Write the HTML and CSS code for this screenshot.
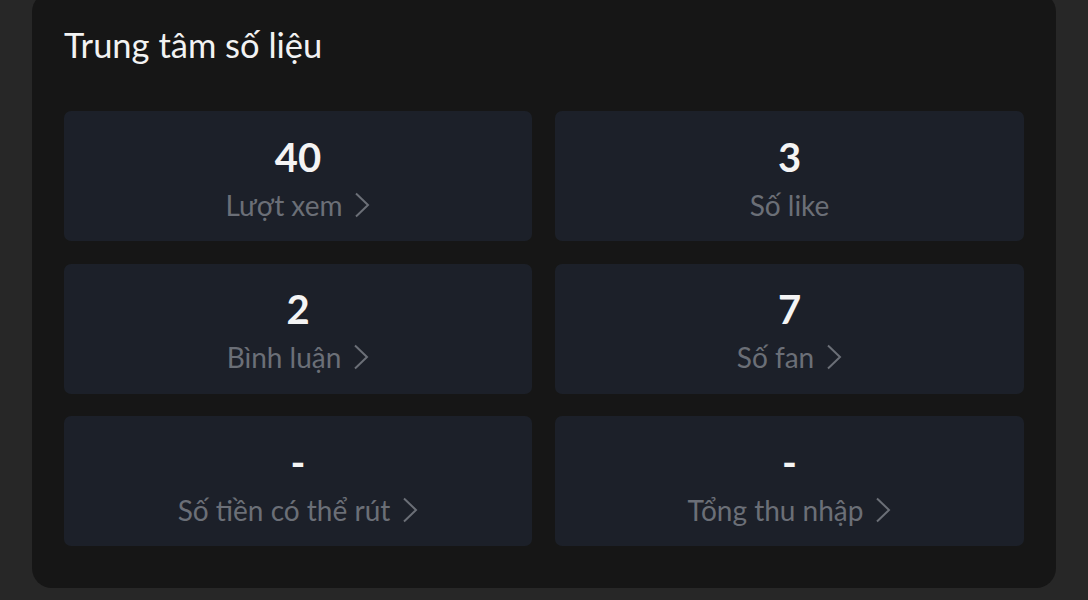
FILE: index.html
```html
<!DOCTYPE html>
<html lang="vi">
<head>
<meta charset="utf-8">
<link rel="stylesheet" href="styles.css">
</head>
<body>
<div class="panel">
  <h1 class="title">Trung tâm số liệu</h1>
  <div class="grid">
    <div class="card"><div class="num">40</div><div class="label">Lượt xem <svg class="chev" viewBox="0 0 16 26"><polyline points="2,1.5 14,13 2,24.5"/></svg></div></div>
    <div class="card"><div class="num">3</div><div class="label">Số like</div></div>
    <div class="card"><div class="num">2</div><div class="label">Bình luận <svg class="chev" viewBox="0 0 16 26"><polyline points="2,1.5 14,13 2,24.5"/></svg></div></div>
    <div class="card"><div class="num">7</div><div class="label">Số fan <svg class="chev" viewBox="0 0 16 26"><polyline points="2,1.5 14,13 2,24.5"/></svg></div></div>
    <div class="card"><div class="num">-</div><div class="label">Số tiền có thể rút <svg class="chev" viewBox="0 0 16 26"><polyline points="2,1.5 14,13 2,24.5"/></svg></div></div>
    <div class="card"><div class="num">-</div><div class="label">Tổng thu nhập <svg class="chev" viewBox="0 0 16 26"><polyline points="2,1.5 14,13 2,24.5"/></svg></div></div>
  </div>
</div>
</body>
</html>
```
FILE: styles.css
```css
html, body {
  margin: 0;
  padding: 0;
  background: #272727;
  height: 600px;
  overflow: hidden;
  font-family: "Lato", "Noto Sans", sans-serif;
}
.panel {
  margin: -8px 0 0 32px;
  width: 1024px;
  box-sizing: border-box;
  background: #161616;
  border-radius: 20px;
  padding: 32px 32px 42px 32px;
}
.title {
  margin: 0 0 45px 0;
  font-weight: 400;
  font-size: 34.5px;
  line-height: 42px;
  color: #f2f2f2;
}
.grid {
  display: grid;
  grid-template-columns: 468px 469px;
  column-gap: 23px;
  row-gap: 22.5px;
}
.card {
  height: 130px;
  background: #1c2029;
  border-radius: 7px;
  display: flex;
  flex-direction: column;
  align-items: center;
  justify-content: center;
  padding-top: 4px;
  box-sizing: border-box;
}
.num {
  font-weight: 700;
  font-size: 40px;
  line-height: 44px;
  color: #f4f4f4;
}
.label {
  margin-top: 9px;
  font-size: 28px;
  line-height: 34px;
  color: #6b6f77;
  display: flex;
  align-items: center;
  gap: 12px;
}
.chev {
  width: 16px;
  height: 26px;
  fill: none;
  stroke: #6b6f77;
  stroke-width: 2;
}
```
